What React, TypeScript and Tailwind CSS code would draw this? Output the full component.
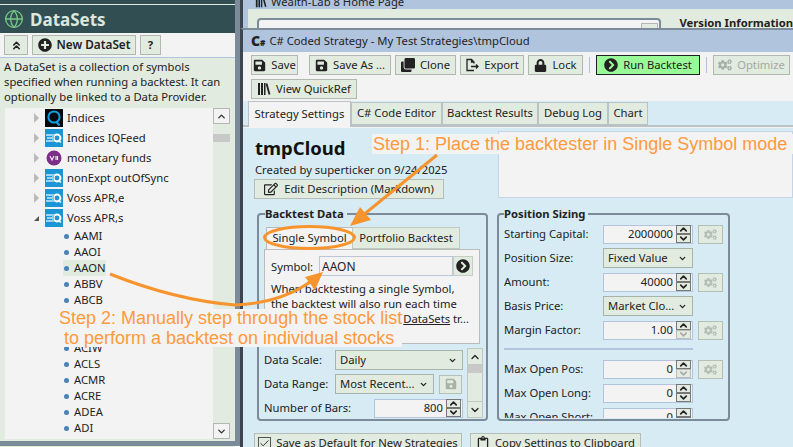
import React from 'react';
import {
  FaSave,
  FaClone,
  FaLock,
  FaChevronCircleRight,
  FaCogs,
  FaRegEdit,
  FaPlusCircle,
  FaRegClipboard,
} from 'react-icons/fa';
import { ChevronUp, ChevronDown, ChevronsUp, Check, Globe } from 'lucide-react';
import { twMerge } from 'tailwind-merge';

const IqIcon: React.FC = () => (
  <svg width="18" height="18" viewBox="0 0 18 18" className="shrink-0">
    <rect width="18" height="18" fill="#1a96d6" />
    <path d="M1 6h6M2 9h5M1 12h6" stroke="#cfe8f6" strokeWidth="1.5" />
    <circle cx="12" cy="9" r="3.4" fill="none" stroke="#fff" strokeWidth="2" />
    <path d="M13 11l3 2.5" stroke="#fff" strokeWidth="1.5" />
    <path d="M7 5h2v8H7z" fill="#8cc8ea" />
  </svg>
);

const QIcon: React.FC = () => (
  <svg width="18" height="18" viewBox="0 0 18 18" className="shrink-0">
    <rect width="18" height="18" fill="#05090c" />
    <circle cx="9" cy="8" r="5.6" fill="none" stroke="#0f9fe0" strokeWidth="2" />
    <path d="M11 12.5l3.5 4" stroke="#0f9fe0" strokeWidth="2" />
  </svg>
);

const VanIcon: React.FC = () => (
  <svg width="18" height="18" viewBox="0 0 18 18" className="shrink-0">
    <circle cx="9" cy="9" r="7.5" fill="#7b2f86" />
    <path d="M5 7l2 4 2-4M11 7v4M12.5 7v4" stroke="#f1e4f3" strokeWidth="1.2" fill="none" />
  </svg>
);

const BooksIcon: React.FC<{ size?: number }> = ({ size = 14 }) => (
  <svg width={size} height={size} viewBox="0 0 14 14" className="shrink-0">
    <path d="M1 1h2v12H1zM4 1h2v12H4zM7 1h1.5v12H7z" fill="#222" />
    <path d="M9.5 1.5l3 11" stroke="#222" strokeWidth="1.8" />
  </svg>
);

const ExportIcon: React.FC = () => (
  <svg width="14" height="14" viewBox="0 0 14 14" fill="none" stroke="#222" strokeWidth="1.3" className="shrink-0">
    <path d="M9 12.5H2V1.5h4.5L9 4v1.5M6.5 1.5V4H9" />
    <path d="M6 8.5h7M11 6.5l2 2-2 2" />
  </svg>
);

const ToolButton: React.FC<{ className?: string; children: React.ReactNode }> = ({ className, children }) => (
  <button
    className={twMerge(
      'flex h-5 shrink-0 items-center justify-center gap-[5px] whitespace-nowrap border border-[#b0b8b0] bg-[#e2ebe0] text-[11.25px] text-[#222]',
      className,
    )}
  >
    {children}
  </button>
);

const Spin: React.FC<{ downDisabled?: boolean }> = ({ downDisabled }) => (
  <span className="flex h-full w-[17px] shrink-0 flex-col items-center justify-center">
    <span className="flex h-[9px] w-[15px] items-center justify-center border border-[#777] bg-[#e2ebe0]">
      <ChevronUp size={11} strokeWidth={3.5} color="#222" />
    </span>
    <span className={`flex h-[9px] w-[15px] items-center justify-center border ${downDisabled ? 'border-[#bbb]' : 'border-[#777]'} bg-[#e2ebe0]`}>
      <ChevronDown size={11} strokeWidth={3.5} color={downDisabled ? '#aaa' : '#222'} />
    </span>
  </span>
);

const NumInput: React.FC<{ value: string; downDisabled?: boolean; className?: string }> = ({ value, downDisabled, className }) => (
  <div className={`flex h-[19px] items-center border border-[#b0c4de] bg-[#f3f3f3] text-[11.25px] text-[#222] ${className ?? ''}`}>
    <span className="flex-1 pr-[2px] text-right">{value}</span>
    <Spin downDisabled={downDisabled} />
  </div>
);

const GearBtn: React.FC = () => (
  <span className="ml-[5px] flex h-[19px] w-[25px] items-center justify-center border border-[#b5c0b5] bg-[#e2ebe0]">
    <FaCogs size={13} color="#b5bdb5" />
  </span>
);

const Select: React.FC<{ value: string; className?: string }> = ({ value, className }) => (
  <div className={`flex h-5 items-center justify-between whitespace-nowrap border border-[#a9b4a9] bg-[#e2ebe0] pl-1 pr-[5px] text-[11.25px] text-[#222] ${className ?? ''}`}>
    <span>{value}</span>
    <ChevronDown size={9} strokeWidth={3.5} color="#222" />
  </div>
);

const folders = [
  { name: 'Indices', icon: <QIcon /> },
  { name: 'Indices IQFeed', icon: <IqIcon /> },
  { name: 'monetary funds', icon: <VanIcon /> },
  { name: 'nonExpt outOfSync', icon: <IqIcon /> },
  { name: 'Voss APR,e', icon: <IqIcon /> },
];

const symbols = ['AAMI', 'AAOI', 'AAON', 'ABBV', 'ABCB', '', '', 'ACIW', 'ACLS', 'ACMR', 'ACRE', 'ADEA', 'ADI'];

const sizingRows = [
  { label: 'Starting Capital:', value: '2000000', gear: true },
  { label: 'Position Size:', select: 'Fixed Value' },
  { label: 'Amount:', value: '40000', gear: true },
  { label: 'Basis Price:', select: 'Market Clo...' },
  { label: 'Margin Factor:', value: '1.00', gear: true, downDisabled: true },
];

const DataSetsPanel: React.FC = () => (
  <aside className="flex h-full w-[235px] shrink-0 flex-col bg-[#e2ebe0]">
    {/* header */}
    <div className="mt-[4px] flex h-[29px] shrink-0 items-center gap-[6px] border-t border-[#e2ebe0] bg-[#314f52] pl-1 outline-4 outline-[#314f52]">
      <Globe size={20} color="#77c788" strokeWidth={1.6} />
      <span className="text-[17px] font-bold leading-none text-[#dce8dc]">DataSets</span>
    </div>
    <div className="flex h-[25px] shrink-0 items-center gap-1 border-b border-[#b0c4de] bg-[#f3f3f3] pl-1">
      <ToolButton className="w-6">
        <ChevronsUp size={13} strokeWidth={3} />
      </ToolButton>
      <ToolButton className="w-[104px] text-[11.75px] font-semibold">
        <FaPlusCircle size={14} />
        New DataSet
      </ToolButton>
      <ToolButton className="w-[21px] font-bold">?</ToolButton>
    </div>
    <p className="h-[50px] shrink-0 px-1 pt-[1px] text-[11.25px] leading-[15px] text-[#222]">
      A DataSet is a collection of symbols specified when running a backtest. It can optionally be linked to a Data Provider.
    </p>
    {/* tree */}
    <div className="mx-[5px] flex h-[331px] shrink-0 bg-[#f3f3f3]">
      <div className="flex-1 overflow-hidden pl-[29px] text-[11.25px] text-[#222]">
        {folders.map((f) => (
          <div key={f.name} className="flex h-5 items-center">
            <span className="mr-[6px] h-0 w-0 border-y-[5px] border-l-[5px] border-y-transparent border-l-[#bbb]" />
            {f.icon}
            <span className="ml-[4px]">{f.name}</span>
          </div>
        ))}
        <div className="flex h-5 items-center">
          <span className="mr-[6px] h-0 w-0 border-b-[5px] border-l-[5px] border-b-[#555] border-l-transparent" />
          <IqIcon />
          <span className="ml-[4px]">Voss APR,s</span>
        </div>
        <div className="pl-[29px]">
          {symbols.map((s, i) => (
            <div key={i} className="flex h-4 items-center">
              {s && (
                <span className={`flex h-4 items-center pl-[1px] ${s === 'AAON' ? 'bg-[#e2ebe0]' : ''}`}>
                  <span className="mr-[5px] h-[5px] w-[5px] rounded-full bg-[#4a82b8]" />
                  {s}
                </span>
              )}
            </div>
          ))}
        </div>
      </div>
      <div className="relative flex w-[17px] shrink-0 flex-col justify-between bg-[#e2ebe0]">
        <div className="flex h-4 items-center justify-center border border-[#b5b5b5] bg-[#f3f3f3]">
          <ChevronUp size={11} strokeWidth={3} color="#333" />
        </div>
        <div className="absolute left-0 top-[26px] h-2 w-[17px] bg-[#c8c8c8]" />
        <div className="flex h-4 items-center justify-center border border-[#b5b5b5] bg-[#f3f3f3]">
          <ChevronDown size={11} strokeWidth={3} color="#333" />
        </div>
      </div>
    </div>
    <div className="mt-[2px] h-[5px] shrink-0 bg-[#7b8b99]" />
  </aside>
);

const BacktestData: React.FC = () => (
  <fieldset className="h-[213px] w-[231px] shrink-0 rounded-[4px] border-2 border-[#7b8b99] pl-[5px] pr-[1px]">
    <legend className="ml-[1px] pr-[3px] text-[11.25px] font-bold leading-[11px] text-[#222]">Backtest Data</legend>
    <div className="flex h-[30px] items-end pl-[2px] text-[11.25px] text-[#222]">
      <div className="flex h-[22px] w-[86px] items-center justify-center border-l border-t border-[#bbb] bg-[#f3f3f3]">Single Symbol</div>
      <div className="flex h-[22px] w-[108px] items-center justify-center border border-[#c0c8c0] bg-[#e2ebe0]">Portfolio Backtest</div>
    </div>
    <div className="h-[95px] w-[216px] border border-[#bbb] bg-[#f3f3f3] px-[6px] pt-[6px] text-[11.25px] leading-[15px] text-[#222]">
      <div className="flex h-5 items-center">
        <span className="w-[48px]">Symbol:</span>
        <span className="flex h-5 w-[134px] items-center border border-[#b9c7d9] pl-[2px] text-[12px]">AAON</span>
        <span className="flex h-5 w-5 items-center justify-center border border-[#c5cdc5] bg-[#e2ebe0]">
          <FaChevronCircleRight size={14} color="#222" />
        </span>
      </div>
      <p className="mt-[5px]">When backtesting a single Symbol,</p>
      <p>the backtest will also run each time</p>
      <p className="pr-[4px] text-right">
        <span className="underline">DataSets</span> tr...
      </p>
    </div>
    <div className="mt-[4px] flex text-[11.25px] text-[#222]">
      <div className="w-[203px]">
        <div className="flex h-[24px] items-center">
          <span className="w-[71px]">Data Scale:</span>
          <Select value="Daily" className="w-[128px]" />
        </div>
        <div className="flex h-[24px] items-center">
          <span className="w-[71px]">Data Range:</span>
          <Select value="Most Recent..." className="w-[99px]" />
          <span className="ml-[5px] flex h-[19px] w-[23px] items-center justify-center border border-[#b5c0b5] bg-[#e2ebe0]">
            <FaSave size={12} color="#a9b2a9" />
          </span>
        </div>
        <div className="flex h-[24px] items-center">
          <span className="w-[110px]">Number of Bars:</span>
          <NumInput value="800" className="w-[89px]" />
        </div>
      </div>
      <div className="relative flex h-[70px] w-4 flex-col justify-between border border-[#c0c8c0] bg-[#e2ebe0]">
        <span className="flex h-4 items-center justify-center border-b border-[#c0c8c0] bg-[#e2ebe0]">
          <ChevronUp size={12} strokeWidth={2.5} color="#222" />
        </span>
        <span className="absolute left-0 top-[16px] h-2 w-[14px] bg-[#c8c8c8]" />
        <span className="flex h-4 items-center justify-center border-t border-[#c0c8c0] bg-[#e2ebe0]">
          <ChevronDown size={12} strokeWidth={2.5} color="#222" />
        </span>
      </div>
    </div>
  </fieldset>
);

const PositionSizing: React.FC = () => (
  <fieldset className="ml-[9px] h-[213px] w-[233px] shrink-0 rounded-[4px] border-2 border-[#7b8b99] pl-[5px]">
    <legend className="pr-[3px] text-[11.25px] font-bold leading-[11px] text-[#222]">Position Sizing</legend>
    <div className="h-[199px] overflow-hidden pt-[3px] text-[11.25px] text-[#222]">
      {sizingRows.map((r) => (
        <div key={r.label} className="flex h-[24px] items-center">
          <span className="w-[99px] shrink-0">{r.label}</span>
          {r.select ? (
            <Select value={r.select} className="w-[90px]" />
          ) : (
            <>
              <NumInput value={r.value as string} downDisabled={r.downDisabled} className="w-[90px]" />
              {r.gear && <GearBtn />}
            </>
          )}
        </div>
      ))}
      <div className="mb-[7px] mt-[6px] h-[2px] w-[189px] bg-[#b0c4de]" />
      <div className="flex h-[24px] items-center">
        <span className="w-[99px] shrink-0">Max Open Pos:</span>
        <NumInput value="0" downDisabled className="w-[90px]" />
        <GearBtn />
      </div>
      <div className="flex h-[24px] items-center">
        <span className="w-[99px] shrink-0">Max Open Long:</span>
        <NumInput value="0" className="w-[90px]" />
      </div>
      <div className="flex h-[24px] items-center">
        <span className="w-[99px] shrink-0">Max Open Short:</span>
        <NumInput value="0" className="w-[90px]" />
      </div>
    </div>
  </fieldset>
);

const StrategyWindow: React.FC = () => (
  <div className="flex h-[419px] flex-col border-l-[3px] border-t-2 border-l-[#3d4650] border-t-[#7b8b99] bg-[#f3f3f3]">
    <div className="flex h-[22px] shrink-0 items-center gap-[4px] bg-[#b0c4de] pl-[8px] text-[11.25px] text-[#222]">
      <span className="font-black leading-none">
        <span className="text-[14px]">C</span>
        <span className="text-[8px]">#</span>
      </span>
      <span>C# Coded Strategy - My Test Strategies\tmpCloud</span>
    </div>
    <div className="h-[49px] shrink-0 pl-[8px] pt-[3px]">
      <div className="flex items-center">
        <ToolButton className="w-[47px]">
          <FaSave size={13} /> Save
        </ToolButton>
        <ToolButton className="ml-[11px] w-[82px]">
          <FaSave size={13} /> Save As ...
        </ToolButton>
        <ToolButton className="ml-1 w-[61px]">
          <FaClone size={14} /> Clone
        </ToolButton>
        <ToolButton className="ml-1 w-[64px]">
          <ExportIcon /> Export
        </ToolButton>
        <ToolButton className="ml-1 w-[55px]">
          <FaLock size={13} /> Lock
        </ToolButton>
        <span className="ml-[6px] h-4 w-px bg-[#b0c4de]" />
        <ToolButton className="ml-[6px] w-[104px] border-[#222] bg-[#98fb98]">
          <FaChevronCircleRight size={14} /> Run Backtest
        </ToolButton>
        <span className="ml-[6px] h-4 w-px bg-[#b0c4de]" />
        <ToolButton className="ml-[6px] w-[77px] text-[#a4a9a4]">
          <FaCogs size={14} color="#a9b0a9" /> Optimize
        </ToolButton>
      </div>
      <ToolButton className="mt-1 w-[106px]">
        <BooksIcon /> View QuickRef
      </ToolButton>
    </div>
    <div className="flex h-[26px] shrink-0 items-end border-b-[2px] border-[#b9c2c4] bg-[#d6ebf4] pl-[5px] text-[11.25px] text-[#222]">
      <div className="z-10 -mb-[2px] flex h-[26px] w-[103px] items-center justify-center border border-b-0 border-[#b9c2c4] bg-[#f3f3f3]">Strategy Settings</div>
      <div className="flex h-[23px] w-[91px] items-center justify-center border border-[#b9c2c4] bg-[#e2ebe0]">C# Code Editor</div>
      <div className="flex h-[23px] w-[96px] items-center justify-center border border-[#b9c2c4] bg-[#e2ebe0]">Backtest Results</div>
      <div className="flex h-[23px] w-[70px] items-center justify-center border border-[#b9c2c4] bg-[#e2ebe0]">Debug Log</div>
      <div className="flex h-[23px] w-[40px] items-center justify-center border border-[#b9c2c4] bg-[#e2ebe0]">Chart</div>
    </div>
    <div className="flex-1 overflow-hidden border-t border-[#f3f3f3] bg-[#d6ebf4] pl-[11px] text-[#222]">
      <div className="flex h-[71px]">
        <div className="w-[240px] shrink-0">
          <div className="ml-[1px] mt-[6px] text-[18.5px] font-bold leading-[27px] text-[#111]">tmpCloud</div>
          <div className="ml-[1px] mt-[1px] text-[11.25px] leading-[16px]">Created by superticker on 9/24/2025</div>
          <ToolButton className="mt-[1px] w-[190px] gap-[6px] border-[#b5bdb5]">
            <FaRegEdit size={14} /> Edit Description (Markdown)
          </ToolButton>
        </div>
        <div className="ml-[4px] mt-[3px] h-[67px] flex-1 border border-[#c5d5e5] bg-[#f3f3f3]" />
      </div>
      <div className="ml-[3px] mt-[9px] flex">
        <BacktestData />
        <PositionSizing />
      </div>
      <div className="mt-[12px] flex gap-2">
        <ToolButton className="w-[208px] border-[#b5bdb5]">
          <Check size={13} strokeWidth={2} className="border border-[#555]" /> Save as Default for New Strategies
        </ToolButton>
        <ToolButton className="w-[171px] border-[#b5bdb5]">
          <FaRegClipboard size={14} /> Copy Settings to Clipboard
        </ToolButton>
      </div>
    </div>
  </div>
);

const Annotations: React.FC = () => (
  <>
    <div className="absolute left-[372px] top-[134px] flex h-[20px] w-[421px] items-center whitespace-nowrap bg-[#f3f3f3] pl-[1px] font-['Liberation_Sans',sans-serif] text-[18px] text-[#ff9a3c]">
      Step 1: Place the backtester in Single Symbol mode
    </div>
    <div className="absolute left-[55px] top-[309px] h-[38px] w-[347px] whitespace-nowrap bg-[#f3f3f3] pl-[4px] font-['Liberation_Sans',sans-serif] text-[18px] leading-[20px] text-[#ff9a3c]">
      <div className="-mt-[1px]">Step 2: Manually step through the stock list</div>
      <div className="pl-[5px]">to perform a backtest on individual stocks</div>
    </div>
    <svg className="absolute left-0 top-0" width="793" height="447" viewBox="0 0 793 447" fill="none">
      <path d="M437 155 L362 216" stroke="#f7942e" strokeWidth="3" />
      <path d="M350 226 L360 207 L371 220 Z" fill="#f7942e" />
      <ellipse cx="309.5" cy="237.5" rx="45" ry="11" stroke="#f7942e" strokeWidth="3" />
      <path d="M110 274 Q175 300 235 305 Q280 303 310 282" stroke="#f7942e" strokeWidth="3" />
      <path d="M323 272 L305 277 L315 290 Z" fill="#f7942e" />
    </svg>
  </>
);

const App: React.FC = () => (
  <div className="relative flex h-[447px] w-[793px] overflow-hidden bg-white font-['Noto_Sans',sans-serif]">
    <DataSetsPanel />
    <div className="h-[446px] w-[5px] shrink-0 bg-[#7b8b99]" />
    <main className="min-w-0 flex-1">
      {/* window behind */}
      <div className="h-[28px] overflow-hidden border-l-[3px] border-[#3d4650] bg-[#b0c4de]">
        <div className="-mt-[6px] flex h-[15px] items-center gap-[4px] pl-[12px] text-[11.25px] leading-[14px] text-[#222]">
          <BooksIcon size={12} />
          Wealth-Lab 8 Home Page
        </div>
        <div className="ml-[5px] flex h-[21px] bg-[#e2ebe0] pl-[9px] pt-[9px]">
          <div className="flex h-[14px] w-[414px] justify-end rounded-t-[4px] border-2 border-[#7b8b99] bg-[#f3f3f3] pr-px pt-[3px]">
            <span className="h-[10px] w-[17px] border border-[#b5b5b5] bg-[#e2ebe0]" />
          </div>
          <div className="relative ml-[18px] -mt-[1px] whitespace-nowrap text-[11.25px] font-bold leading-none text-[#222]">Version Information</div>
        </div>
      </div>
      <StrategyWindow />
    </main>
    <Annotations />
  </div>
);

export default App;
